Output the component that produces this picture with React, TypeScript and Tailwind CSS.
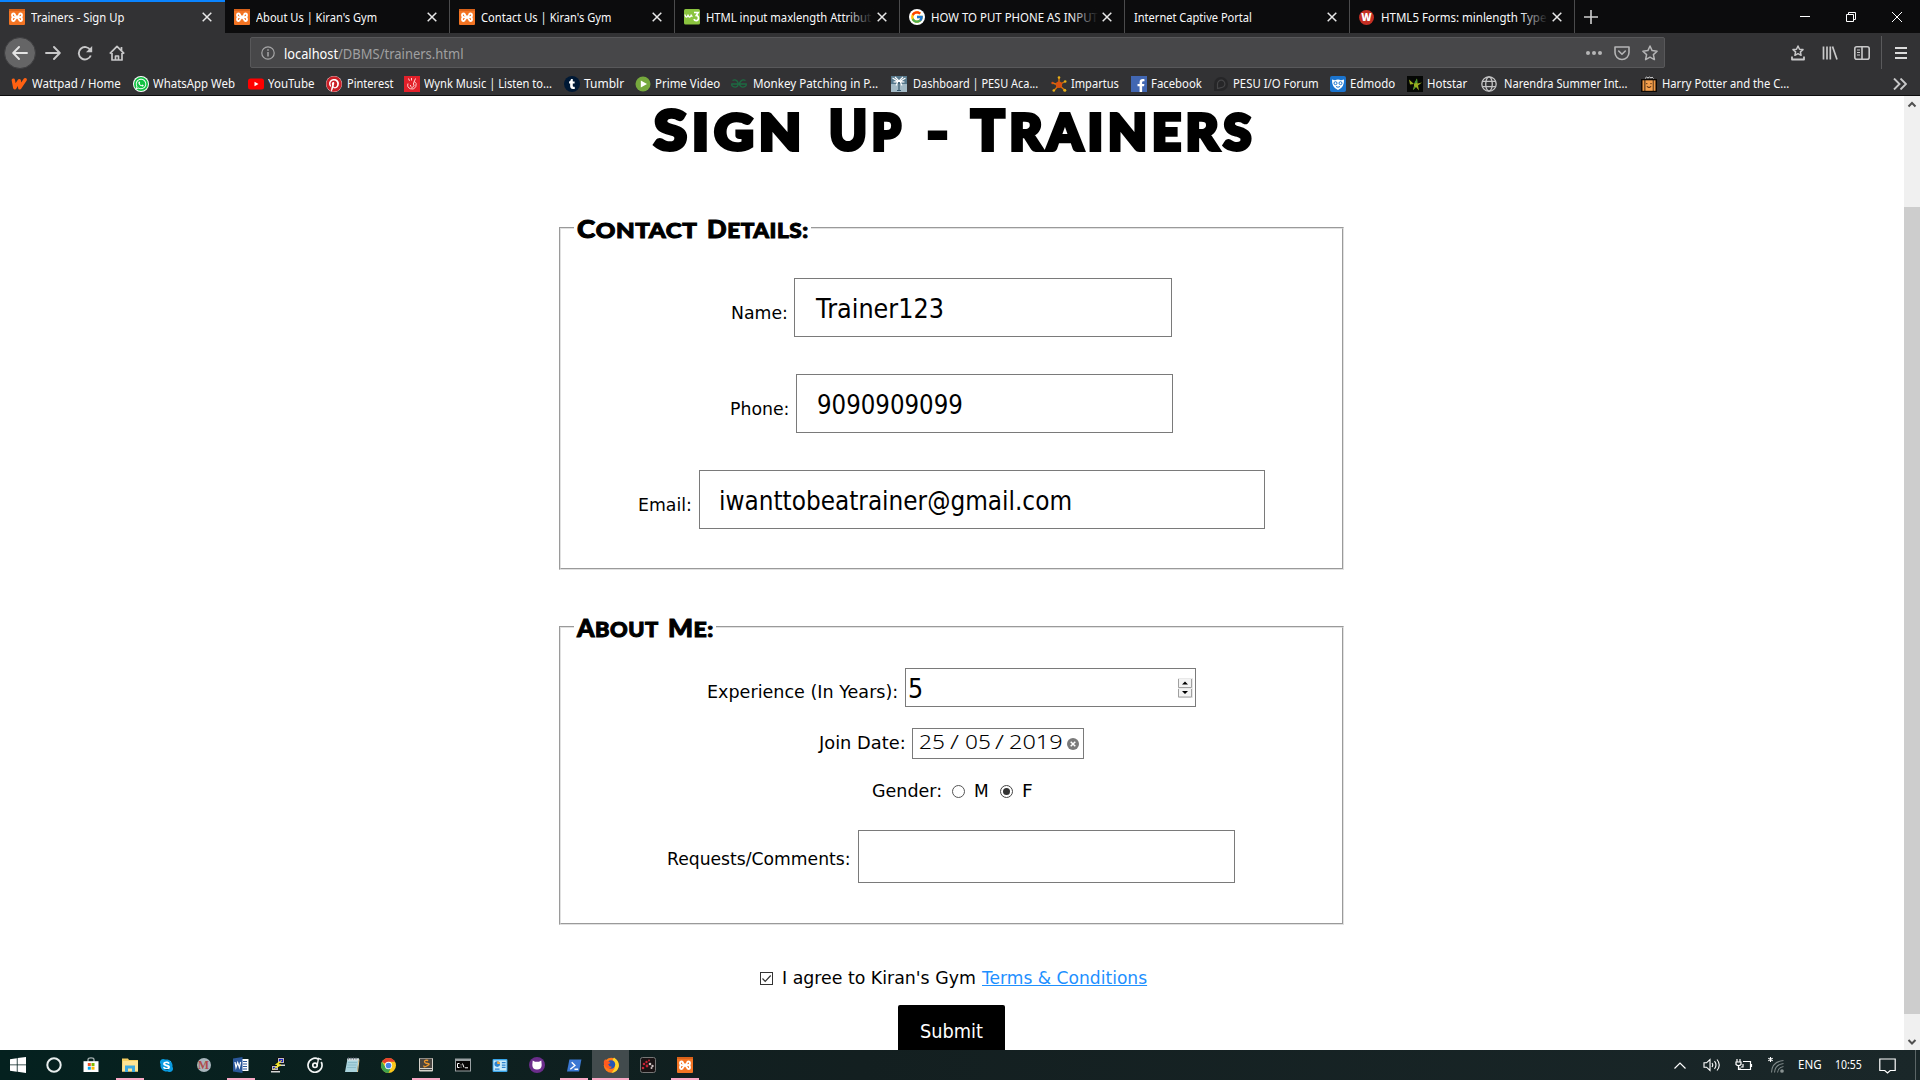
import React, { useLayoutEffect, useRef, useState } from "react";
import { FaWhatsapp, FaPinterest, FaTumblr, FaFacebookF, FaSkype } from "react-icons/fa";
import { FcGoogle } from "react-icons/fc";

/** Single line of text stretched to the width of its box. */
function Fit({ className = "", children }: { className?: string; children: React.ReactNode }) {
  const outer = useRef<HTMLSpanElement>(null);
  const inner = useRef<HTMLSpanElement>(null);
  const [scale, setScale] = useState(1);
  useLayoutEffect(() => {
    if (outer.current && inner.current) {
      setScale(outer.current.offsetWidth / inner.current.offsetWidth);
    }
  }, []);
  return (
    <span ref={outer} className={"block shrink-0 whitespace-nowrap " + className}>
      <span ref={inner} className="inline-block origin-left" style={{ transform: `scaleX(${scale})` }}>
        {children}
      </span>
    </span>
  );
}

/* ---------- site icons ---------- */

const Xampp = ({ className = "size-4" }: { className?: string }) => (
  <svg viewBox="0 0 16 16" className={className}>
    <rect width="16" height="16" rx="1" fill="#f37423" />
    <rect width="16" height="2" fill="#d9621a" />
    <g fill="none" stroke="#fff" strokeWidth="1.8" strokeLinecap="round" strokeLinejoin="round">
      <path d="M6 6.200Q5.800 4.500 4.500 4.500 3 4.500 3 6.200T5 8.200H11Q13 8 13 6.200 13 4.500 11.500 4.500 10.200 4.500 10 6L6 10.400Q5.800 12 4.500 12 3 12 3 10.200T5 8.200" />
      <path d="M6 6 10 10.400Q10.200 12 11.500 12 13 12 13 10.200T11 8.200" />
    </g>
  </svg>
);

const W3 = () => (
  <svg viewBox="0 0 16 16" className="size-4">
    <rect width="16" height="15.500" rx="1.500" fill="#8bc43f" />
    <path d="M1 5.500q.3 2.500 1.500 2.500T4 5.500q.3 2.500 1.600 2.500T7.200 5.500q.2 2 1.300 2" fill="none" stroke="#fff" strokeWidth="1.300" />
    <path d="M10 3.500h4.200l-2 3q2.300.3 2.300 2.600 0 2.600-2.300 2.600-1.700 0-2.300-1.600" fill="none" stroke="#fff" strokeWidth="1.600" />
  </svg>
);

const GoogleFav = () => (
  <span className="flex size-4 items-center justify-center rounded-full bg-white">
    <FcGoogle className="size-[14px]" />
  </span>
);

const WBall = () => (
  <span className="flex size-[15px] items-center justify-center rounded-full bg-[#c52f24] font-['Open_Sans',sans-serif] text-[10px] leading-none font-extrabold text-white">
    W
  </span>
);

const Wattpad = () => (
  <svg viewBox="0 0 17 16" className="h-4 w-[17px]">
    <path d="M2.500 4 4 12l4.800-7.500.5 7.500L15 3.500" fill="none" stroke="#ff6112" strokeWidth="3.600" strokeLinecap="round" strokeLinejoin="round" />
  </svg>
);
const WhatsApp = () => (
  <span className="flex size-4 items-center justify-center rounded-full bg-white">
    <span className="flex size-[14px] items-center justify-center rounded-full bg-[#12c143]">
      <FaWhatsapp className="size-3 text-white" />
    </span>
  </span>
);
const YouTube = () => (
  <svg viewBox="0 0 16 16" className="size-4">
    <rect y="2.500" width="16" height="11" rx="2.500" fill="#f00" />
    <path d="M6.500 5.700v4.600L10.500 8z" fill="#fff" />
  </svg>
);
const Pinterest = () => (
  <span className="flex size-4 rounded-full bg-white">
    <FaPinterest className="size-4 text-[#cb1f27]" />
  </span>
);
const Wynk = () => (
  <svg viewBox="0 0 16 16" className="size-4">
    <rect width="16" height="16" fill="#e3202a" />
    <path d="M4 7.500a4.200 4.200 0 1 0 6-2.300M6.500 9a1.800 1.800 0 1 0 2.800-1L11.500 2.500M4.500 2.500l1 2.300M7.500 2v2.500" fill="none" stroke="#ffd4d4" strokeWidth="1" />
  </svg>
);
const Tumblr = () => (
  <span className="flex size-4 items-center justify-center rounded-full bg-[#001935]">
    <FaTumblr className="size-[10px] text-white" />
  </span>
);
const Prime = () => (
  <svg viewBox="0 0 16 16" className="size-4">
    <circle cx="8" cy="8" r="7.500" fill="#76a93d" />
    <path d="M5.800 4.500v7L12 8z" fill="#fff" />
  </svg>
);
const Geeks = () => (
  <svg viewBox="0 0 16 16" className="size-4">
    <path d="M1.500 4.500q2.500-1.500 4.500.5t.6 5q-2.200 2-5 .2Q.5 9.500.8 8H15.200q.3 1.500-.8 2.200-2.800 1.800-5-.2T10 5q2-2 4.500-.5" fill="none" stroke="#1d6b42" strokeWidth="1.300" />
  </svg>
);
const Pesu = () => (
  <svg viewBox="0 0 16 16" className="size-4">
    <rect width="16" height="16" fill="#56788c" />
    <rect y="8" width="16" height="8" fill="#a3bac6" />
    <path d="m1.500 2 5.500 3.500L2.500 6M14.500 2 9 5.500l4.500.5M7 5.500 5 9.500M9 5.500l2 4M4 1l4 4 4-4" fill="none" stroke="#fff" strokeWidth="1.100" />
    <path d="M8 6v8M6 14.500h4" stroke="#34566b" strokeWidth="1.200" />
  </svg>
);
const Impartus = () => (
  <svg viewBox="0 0 16 16" className="size-4">
    <path d="M8 9V1.500M8 9l6-3.500M8 9l5.500 5M8 9l-5 5.500M8 9 1.500 7" stroke="#d5740c" strokeWidth="1.400" />
    <circle cx="8" cy="8.800" r="3.200" fill="#d9510f" />
    <g fill="#e5b019">
      <circle cx="8" cy="1.500" r="1.300" />
      <circle cx="14.200" cy="5.500" r="1.300" />
      <circle cx="13.800" cy="14.300" r="1.500" />
      <circle cx="2.800" cy="14.500" r="1.300" />
      <circle cx="1.500" cy="7" r="1.200" fill="#d9510f" />
    </g>
  </svg>
);
const Facebook = () => (
  <span className="flex size-4 items-end justify-center bg-[#4267b2] pl-1">
    <FaFacebookF className="size-[13px] text-white" />
  </span>
);
const Forum = () => (
  <svg viewBox="0 0 16 16" className="size-4">
    <path d="M1 15V8a7 7 0 1 1 7 7z" fill="#262628" />
    <path d="M4.500 12.500V8A3.700 3.700 0 1 1 8 11.600z" fill="none" stroke="#454547" strokeWidth="1.200" />
  </svg>
);
const Edmodo = () => (
  <svg viewBox="0 0 16 16" className="size-4">
    <rect width="16" height="16" rx="2" fill="#1b74ce" />
    <path d="M2 3.500 5 4.200Q8 3 11 4.200L14 3.500Q14.500 11.500 8 14 1.500 11.500 2 3.500z" fill="#fff" />
    <circle cx="5.500" cy="7.200" r="1.500" fill="none" stroke="#1b74ce" />
    <circle cx="10.500" cy="7.200" r="1.500" fill="none" stroke="#1b74ce" />
    <path d="M6 10.500q2 1.500 4 0" fill="none" stroke="#1b74ce" />
  </svg>
);
const Hotstar = () => (
  <svg viewBox="0 0 16 16" className="size-4">
    <rect width="16" height="16" fill="#050705" />
    <path d="M2 3.500 7 8l-4 .500zM7 8l3-5.500 .5 5 4.500-1-4 3 1 5-3-3.500L6 14l1-4z" fill="#9aae1f" />
    <path d="m7 8 3-5.500.3 4zM7.500 10 6 14l2.500-2.500z" fill="#3f9a35" />
  </svg>
);
const Globe = () => (
  <svg viewBox="0 0 16 16" className="size-4" fill="none" stroke="#c4c4c5" strokeWidth="1.300">
    <circle cx="8" cy="8" r="7.200" />
    <ellipse cx="8" cy="8" rx="3.300" ry="7.200" />
    <path d="M1.500 5.300h13M1.500 10.700h13" />
  </svg>
);
const Harry = () => (
  <svg viewBox="0 0 16 16" className="size-4">
    <path d="M4 2.500Q5.500 0 7 2 8.500 0 10 2 11 0 12.500 2.500" fill="none" stroke="#d8d8d8" />
    <rect y="3" width="16" height="13" fill="#0d0906" />
    <rect x="1.500" y="4.300" width="2" height="10.500" fill="#f19a45" />
    <rect x="12.500" y="4.300" width="2" height="10.500" fill="#f19a45" />
    <rect x="4.300" y="4.300" width="7.500" height="10.500" fill="#f4a04d" />
    <path d="M5.800 7v1.200M10 7v1.200M5.800 10.500q2.200 2 4.400 0" fill="none" stroke="#42210a" />
  </svg>
);

/* ---------- browser chrome ---------- */

const tabs = [
  { icon: <Xampp />, label: "Trainers - Sign Up", w: "w-[93px]", active: true },
  { icon: <Xampp />, label: "About Us | Kiran's Gym", w: "w-[121px]", edge: true },
  { icon: <Xampp />, label: "Contact Us | Kiran's Gym", w: "w-[130px]", edge: true },
  { icon: <W3 />, label: "HTML input maxlength Attribut", w: "w-[165px]", edge: true, fade: true },
  { icon: <GoogleFav />, label: "HOW TO PUT PHONE AS INPUT", w: "w-[167px]", edge: true, fade: true },
  { label: "Internet Captive Portal", w: "w-[118px]", edge: true },
  { icon: <WBall />, label: "HTML5 Forms: minlength Type", w: "w-[165px]", edge: true, fade: true },
];

const CloseX = () => (
  <svg viewBox="0 0 10 10" className="size-[10px] shrink-0" stroke="#e8e8e8" strokeWidth="1.500">
    <path d="m.7.7 8.600 8.600M9.300.7.7 9.300" />
  </svg>
);

function TabStrip() {
  return (
    <div className="flex h-[33px] bg-[#0c0c0d] text-[12px] leading-4 text-[#f9f9fa]">
      {tabs.map((t) => (
        <div
          key={t.label}
          className={
            "relative flex h-[33px] w-[225px] shrink-0 items-center pl-[9px] " +
            (t.active ? "bg-[#323234] " : "") +
            (t.edge ? "shadow-[inset_-1px_0_0_#4b4b4c]" : "")
          }
        >
          {t.active && <div className="absolute inset-x-0 top-0 h-[2px] bg-[#0a84ff]" />}
          {t.icon && <div className="mr-[6px] w-4 shrink-0 pt-px">{t.icon}</div>}
          <div className="relative flex-1 pt-[2px]">
            <Fit className={t.w}>{t.label}</Fit>
            {t.fade && <div className="absolute top-0 left-[140px] h-full w-[32px] bg-linear-to-r from-transparent to-[#0c0c0d] to-85%" />}
          </div>
          <div className="relative flex w-[24px] pt-px pl-px">
            <CloseX />
          </div>
        </div>
      ))}
      <div className="flex w-[32px] items-center justify-center">
        <svg viewBox="0 0 14 14" className="size-[14px]" stroke="#d0d0d0" strokeWidth="1.600">
          <path d="M7 0v14M0 7h14" />
        </svg>
      </div>
      <div className="flex flex-1 items-center justify-end gap-[36px] pr-[18px]">
        <svg viewBox="0 0 10 10" className="size-[10px]" stroke="#fff"><path d="M0 4.500h10" /></svg>
        <svg viewBox="0 0 10 10" className="size-[10px]" fill="none" stroke="#fff"><path d="M.5 2.500h7v7h-7zM2.500 2.500v-2h7v7h-2" /></svg>
        <svg viewBox="0 0 10 10" className="size-[10px]" stroke="#fff"><path d="m0 0 10 10M10 0 0 10" /></svg>
      </div>
    </div>
  );
}

function NavBar() {
  return (
    <div className="flex h-[38px] items-center bg-[#323234] pt-px text-[#c8c8c9]">
      <div className="ml-1 flex size-8 items-center justify-center rounded-full border border-[#3e3e40] bg-[#656566]">
        <svg viewBox="0 0 16 16" className="size-4" fill="none" stroke="#e4e4e4" strokeWidth="1.900" strokeLinecap="round" strokeLinejoin="round">
          <path d="M15 8H1.500M7 2 1.200 8 7 14" />
        </svg>
      </div>
      <svg viewBox="0 0 16 16" className="ml-[9px] size-4" fill="none" stroke="currentColor" strokeWidth="1.900" strokeLinecap="round" strokeLinejoin="round">
        <path d="M1 8h13.500M9 2l5.800 6L9 14" />
      </svg>
      <svg viewBox="0 0 16 16" className="ml-4 size-4" fill="none" stroke="currentColor" strokeWidth="1.900">
        <path d="M13.400 5.200A6.200 6.200 0 1 0 13.800 10.500" />
        <path d="M15.200 1v6.200H9z" fill="currentColor" stroke="none" />
      </svg>
      <svg viewBox="0 0 16 16" className="ml-4 size-4" fill="none" stroke="currentColor" strokeWidth="1.700" strokeLinejoin="round">
        <path d="M.8 8.700 8 1.300l7.200 7.400M3 8v7h10V8M6.500 15v-4h3v4M12.500 5.500V2" />
      </svg>
      <div className="ml-[125px] flex h-[31px] w-[1415px] items-center rounded-[2px] border border-[#58585a] bg-[#474749] pl-[10px]">
        <svg viewBox="0 0 14 14" className="size-[14px]" fill="none" stroke="#a7a7a8" strokeWidth="1.200">
          <circle cx="7" cy="7" r="6.200" />
          <path d="M7 6v4.500M7 3.300v1.500" strokeWidth="1.500" />
        </svg>
        <div className="ml-[9px] flex flex-1 pt-[2px] text-[13.500px] leading-[18px]">
          <Fit className="w-[54px] text-white">localhost</Fit>
          <Fit className="w-[126px] text-[#a0a0a1]">/DBMS/trainers.html</Fit>
        </div>
        <svg viewBox="0 0 16 16" className="size-4" fill="#b5b5b6"><circle cx="2" cy="8" r="2" /><circle cx="8" cy="8" r="2" /><circle cx="14" cy="8" r="2" /></svg>
        <svg viewBox="0 0 16 16" className="ml-3 size-4" fill="none" stroke="#b5b5b6" strokeWidth="1.600" strokeLinecap="round" strokeLinejoin="round">
          <path d="M1 2h14v5.500a7 7 0 0 1-14 0zM4.700 6 8 9.200 11.300 6" />
        </svg>
        <svg viewBox="0 0 16 16" className="mr-[6px] ml-3 size-4" fill="none" stroke="#b5b5b6" strokeWidth="1.500" strokeLinejoin="round">
          <path d="m8 1 2.100 4.600 5 .6-3.700 3.400 1 5L8 12.200l-4.400 2.400 1-5L.9 6.200l5-.6z" />
        </svg>
      </div>
      <svg viewBox="0 0 16 16" className="ml-[125px] size-4" fill="none" stroke="currentColor" strokeWidth="1.500" strokeLinejoin="round">
        <path d="m8 1 1.500 3.200 3.500.4-2.600 2.300.7 3.400L8 8.700l-3.100 1.600.7-3.400L3 4.600l3.500-.4z" />
        <path d="M2 11.500v3h12v-3" strokeWidth="1.800" />
      </svg>
      <svg viewBox="0 0 16 16" className="ml-4 size-4" stroke="currentColor" strokeWidth="1.700">
        <path d="M1.500 1.500v13M5 1.500v13M8.300 1.500v13M10.500 1.500l4.500 13" />
      </svg>
      <svg viewBox="0 0 16 16" className="ml-4 size-4" fill="none" stroke="currentColor" strokeWidth="1.600">
        <rect x=".8" y="1.800" width="14.400" height="12.400" rx="2" />
        <path d="M8 2v12" />
        <path d="M3 5h3M3 7.500h3M3 10h3" strokeWidth="1.100" />
      </svg>
      <div className="ml-[11px] h-[33px] w-px bg-[#5a5a5c]" />
      <svg viewBox="0 0 12 12" className="ml-[13px] h-3 w-3" stroke="#dcdcdc" strokeWidth="1.900">
        <path d="M0 1h12M0 6h12M0 11h12" />
      </svg>
    </div>
  );
}

const bookmarks = [
  { icon: <Wattpad />, label: "Wattpad / Home", item: "w-[122px] gap-[5px]", text: "w-[89px]" },
  { icon: <WhatsApp />, label: "WhatsApp Web", item: "w-[115px] gap-1", text: "w-[82px]" },
  { icon: <YouTube />, label: "YouTube", item: "w-[78px] gap-1", text: "w-[47px]" },
  { icon: <Pinterest />, label: "Pinterest", item: "w-[78px] gap-[5px]", text: "w-[46px]" },
  { icon: <Wynk />, label: "Wynk Music | Listen to...", item: "w-[160px] gap-1", text: "w-[128px]" },
  { icon: <Tumblr />, label: "Tumblr", item: "w-[71px] gap-1", text: "w-[40px]" },
  { icon: <Prime />, label: "Prime Video", item: "w-[96px] gap-1", text: "w-[65px]" },
  { icon: <Geeks />, label: "Monkey Patching in P...", item: "w-[160px] gap-[6px]", text: "w-[125px]" },
  { icon: <Pesu />, label: "Dashboard | PESU Aca...", item: "w-[160px] gap-[6px]", text: "w-[125px]" },
  { icon: <Impartus />, label: "Impartus", item: "w-[80px] gap-1", text: "w-[48px]" },
  { icon: <Facebook />, label: "Facebook", item: "w-[82px] gap-1", text: "w-[51px]" },
  { icon: <Forum />, label: "PESU I/O Forum", item: "w-[117px] gap-1", text: "w-[86px]" },
  { icon: <Edmodo />, label: "Edmodo", item: "w-[77px] gap-1", text: "w-[45px]" },
  { icon: <Hotstar />, label: "Hotstar", item: "w-[74px] gap-1", text: "w-[40px]" },
  { icon: <Globe />, label: "Narendra Summer Int...", item: "w-[160px] gap-[7px]", text: "w-[123px]" },
  { icon: <Harry />, label: "Harry Potter and the C...", item: "w-[160px] gap-[5px]", text: "w-[127px]" },
];

function Bookmarks() {
  return (
    <div className="flex h-[25px] items-center border-b border-[#0c0c0d] bg-[#323234] pt-px pl-[11px] text-[12px] leading-4 text-[#f9f9fa]">
      {bookmarks.map((b) => (
        <div key={b.label} className={"flex shrink-0 items-center " + b.item}>
          <div className="flex w-4 shrink-0 items-center">{b.icon}</div>
          <Fit className={b.text}>{b.label}</Fit>
        </div>
      ))}
      <svg viewBox="0 0 14 12" className="mr-[13px] ml-auto h-3 w-[14px]" fill="none" stroke="#c8c8c9" strokeWidth="1.900">
        <path d="m1 .5 5.500 5.500L1 11.500M7.500.5 13 6l-5.500 5.500" />
      </svg>
    </div>
  );
}

/* ---------- page ---------- */

function Panel({ className, gap, title, children }: { className: string; gap: string; title: React.ReactNode; children: React.ReactNode }) {
  return (
    <section className={"relative ml-[559px] w-[785px] border border-t-[#9a9a9a] border-r-[#e1e1e1] border-b-[#e1e1e1] border-l-[#9a9a9a] " + className}>
      <div className="h-full border border-t-[#e1e1e1] border-r-[#9a9a9a] border-b-[#9a9a9a] border-l-[#e1e1e1]">{children}</div>
      <div className={"absolute -top-[12px] left-[14px] flex h-[26px] items-baseline gap-[9px] bg-white pl-[3px] font-['Lato',sans-serif] text-[21px] leading-[25px] font-black tracking-[0.5px] uppercase [-webkit-text-stroke:1px_#000] " + gap}>
        {title}
      </div>
    </section>
  );
}

const Big = ({ children }: { children: string }) => <span className="text-[24px]">{children}</span>;
const Huge = ({ children }: { children: string }) => <span className="text-[55px]">{children}</span>;

const Spinner = () => (
  <svg viewBox="0 0 15 20" className="h-5 w-[15px]">
    <rect width="15" height="20" fill="#e9e9e9" />
    <path d="M.5 1v8.500h13V1M.5 11v8h13v-8" fill="#f3f3f3" stroke="#a0a0a0" />
    <path d="M4 6.500h6L7 3.500zM4 13h6L7 16z" fill="#000" />
  </svg>
);

function Page() {
  return (
    <main className="h-[954px] w-[1904px] overflow-hidden bg-white font-['DejaVu_Sans',sans-serif] text-[17px] leading-5 text-black">
      <h1 className="flex h-[130px] items-baseline pl-[654px] font-['Lato',sans-serif] text-[50px] leading-[66px] font-black tracking-[5px] uppercase [-webkit-text-stroke:4px_#000] [stroke-linejoin:round]">
        <Fit className="mr-[23px] w-[152px]"><Huge>S</Huge>ign</Fit>
        <Fit className="mr-[22px] w-[76px]"><Huge>U</Huge>p</Fit>
        <Fit className="mr-[17px] w-[27px]">-</Fit>
        <Fit className="w-[285px]"><Huge>T</Huge>rainers</Fit>
      </h1>

      <Panel
        className="mt-px h-[343px]"
        gap="w-[237px]"
        title={<><Fit className="w-[121px]"><Big>C</Big>ontact</Fit><Fit className="w-[102px]"><Big>D</Big>etails:</Fit></>}
      >
        <div className="mt-[49px] ml-[170px] flex h-[60px] items-start">
          <Fit className="mt-[25px] w-[57px]">Name:</Fit>
          <div className="ml-[6px] h-[59px] w-[378px] border border-[#7a7a7a] pt-[14px] pl-[21px]">
            <Fit className="w-[128px] text-[27px] leading-[32px]">Trainer123</Fit>
          </div>
        </div>
        <div className="mt-[36px] ml-[169px] flex h-[60px] items-start">
          <Fit className="mt-[25px] w-[59px]">Phone:</Fit>
          <div className="ml-[7px] h-[59px] w-[377px] border border-[#7a7a7a] pt-[14px] pl-[20px]">
            <Fit className="w-[146px] text-[27px] leading-[32px]">9090909099</Fit>
          </div>
        </div>
        <div className="mt-[36px] ml-[77px] flex h-[60px] items-start">
          <Fit className="mt-[25px] w-[54px]">Email:</Fit>
          <div className="ml-[7px] h-[59px] w-[566px] border border-[#7a7a7a] pt-[14px] pl-[19px]">
            <Fit className="w-[353px] text-[27px] leading-[32px]">iwanttobeatrainer@gmail.com</Fit>
          </div>
        </div>
      </Panel>

      <Panel
        className="mt-[56px] h-[299px]"
        gap="w-[142px]"
        title={<><Fit className="w-[82px]"><Big>A</Big>bout</Fit><Fit className="w-[46px]"><Big>M</Big>e:</Fit></>}
      >
        <div className="mt-[40px] ml-[146px] flex h-[39px] items-start">
          <Fit className="mt-[14px] w-[191px]">Experience (In Years):</Fit>
          <div className="ml-[7px] flex h-[39px] w-[291px] justify-between border border-[#7a7a7a] pt-[4px] pr-[2px] pl-[2px]">
            <Fit className="w-[15px] text-[27px] leading-[32px]">5</Fit>
            <div className="pt-[5px]"><Spinner /></div>
          </div>
        </div>
        <div className="mt-[21px] ml-[258px] flex h-[31px] items-start">
          <Fit className="mt-[5px] w-[87px]">Join Date:</Fit>
          <div className="ml-[6px] flex h-[31px] w-[172px] items-start border border-[#7a7a7a] pt-px pl-[6px] font-['Noto_Sans',sans-serif] text-[20px] leading-[24px] font-light">
            <Fit className="w-[26px]">25</Fit>
            <Fit className="ml-[5px] w-[9px]">/</Fit>
            <Fit className="ml-[6px] w-[26px]">05</Fit>
            <Fit className="ml-[4px] w-[9px]">/</Fit>
            <Fit className="ml-[5px] w-[54px]">2019</Fit>
            <svg viewBox="0 0 12 12" className="mt-[8px] ml-[4px] size-3">
              <circle cx="6" cy="6" r="6" fill="#7a7a7a" />
              <path d="m3.700 3.700 4.600 4.600M8.300 3.700 3.700 8.300" stroke="#fff" strokeWidth="1.500" />
            </svg>
          </div>
        </div>
        <div className="mt-[22px] ml-[311px] flex h-5 items-center">
          <Fit className="w-[70px]">Gender:</Fit>
          <div className="ml-[10px] size-[13px] rounded-full border border-[#555]" />
          <Fit className="ml-[9px] w-[15px]">M</Fit>
          <div className="ml-[11px] flex size-[13px] items-center justify-center rounded-full border border-[#444]">
            <div className="size-[7px] rounded-full bg-[#333]" />
          </div>
          <Fit className="ml-[9px] w-[11px]">F</Fit>
        </div>
        <div className="mt-[29px] ml-[106px] flex h-[53px] items-start">
          <Fit className="mt-[19px] w-[184px]">Requests/Comments:</Fit>
          <div className="ml-[7px] h-[53px] w-[377px] border border-[#7a7a7a]" />
        </div>
      </Panel>

      <div className="mt-[43px] ml-[760px] flex h-5 items-center">
        <div className="flex size-[13px] items-center justify-center border border-[#333]">
          <svg viewBox="0 0 11 11" className="size-[11px]" fill="none" stroke="#333" strokeWidth="1.200"><path d="m1.500 5.500 2.700 2.800L9.700 2.500" /></svg>
        </div>
        <Fit className="ml-[9px] w-[194px]">I agree to Kiran's Gym</Fit>
        <Fit className="ml-[6px] w-[165px] text-[#1e90ff]"><a className="underline">Terms &amp; Conditions</a></Fit>
      </div>
      <div className="mt-[17px] ml-[898px] h-[60px] w-[107px] rounded-[2px] bg-black pt-[14px] pl-[22px] text-white">
        <Fit className="w-[63px] text-[20px] leading-6">Submit</Fit>
      </div>
    </main>
  );
}

function Scrollbar() {
  return (
    <div className="flex h-[954px] w-4 flex-col items-center bg-[#f0f0f0]">
      <svg viewBox="0 0 16 17" className="h-[17px] w-4" fill="none" stroke="#505050" strokeWidth="2"><path d="m4.500 10.500 3.500-3.500 3.500 3.500" /></svg>
      <div className="mt-[94px] h-[807px] w-4 bg-[#cdcdcd]" />
      <svg viewBox="0 0 16 17" className="mt-auto h-[17px] w-4" fill="none" stroke="#505050" strokeWidth="2"><path d="m4.500 7 3.500 3.500L11.500 7" /></svg>
    </div>
  );
}

/* ---------- taskbar ---------- */

const apps: { name: string; open?: boolean; focus?: boolean; cell?: string; icon: React.ReactNode }[] = [
  { name: "start", cell: "w-[36px]", icon: <svg viewBox="0 0 16 16" className="size-4" fill="#fff"><path d="M0 2.200 6.800 1.200v6.300H0zM7.600 1.100 16 0v7.500H7.600zM0 8.300h6.800v6.400L0 13.800zM7.600 8.300H16V16l-8.400-1.200z" /></svg> },
  { name: "cortana", cell: "w-[36px]", icon: <svg viewBox="0 0 16 16" className="size-4" fill="none" stroke="#e8eeee" strokeWidth="2"><circle cx="8" cy="8" r="6.700" /></svg> },
  { name: "store", cell: "w-[39px] pr-px", icon: <svg viewBox="0 0 16 16" className="size-4"><path d="M5 5V2.500Q5 .8 8 .8t3 1.700V5" fill="none" stroke="#aab4b4" strokeWidth="1.200" /><path d="M.5 4.200h15V15H.5z" fill="#fff" /><path d="M4.800 6h3v3h-3z" fill="#f25022" /><path d="M8.500 6h3v3h-3z" fill="#7fba00" /><path d="M4.800 9.700h3v3h-3z" fill="#00a4ef" /><path d="M8.500 9.700h3v3h-3z" fill="#ffb900" /></svg> },
  { name: "files", open: true, icon: <svg viewBox="0 0 16 16" className="size-4"><path d="M0 1.500h6l1 1.500h9v11.500H0z" fill="#f7cf62" /><path d="M1 4h15v10.500H0z" fill="#ffe394" /><path d="M3 8.500h10V15h-3v-3.500H6V15H3z" fill="#3fa9e0" /></svg> },
  {
    name: "skype",
    icon: (
      <span className="relative flex size-4 items-center justify-center">
        <span className="absolute size-2 bg-white" />
        <FaSkype className="relative size-[15px] text-[#0a9be0]" />
      </span>
    ),
  },
  { name: "mathtype", icon: <span className="flex size-[14px] items-center justify-center rounded-full bg-[#a9b6bd] font-['Liberation_Serif',serif] text-[12px] leading-none font-bold text-[#b04c4c]">M</span> },
  { name: "word", open: true, icon: <svg viewBox="0 0 16 16" className="size-4"><path d="M8 2h7.500v12H8z" fill="#fff" /><path d="M10 4.500h4M10 7h4M10 9.500h4M10 12h4" stroke="#2b579a" /><path d="M0 1.500 9.500 0v16L0 14.500z" fill="#2b579a" /><path d="m2 5 1 5.500L4.700 5.500l1.700 5L7.600 5" fill="none" stroke="#fff" strokeWidth="1.200" /></svg> },
  { name: "putty", icon: <svg viewBox="0 0 16 16" className="size-4"><path d="M7.500.5h7v6h-7zM1.500 8.500h7v5h-7z" fill="#bdbdbd" stroke="#111" /><path d="M9 2h4v3H9zM3 10h3.500v2H3z" fill="#1a1ad0" /><path d="M7 7.500h8V9H7zM1 14h9v1.500H1z" fill="#d6d6d6" /><path d="M12 3 5.500 7.500l3 .5L3 12.500l8-4.500-3-.5z" fill="#ffef1f" stroke="#ffef1f" strokeWidth=".6" /></svg> },
  { name: "groove", icon: <svg viewBox="0 0 16 16" className="size-4" fill="none" stroke="#f2f5f5" strokeWidth="1.700"><path d="M11.500 2.200A7 7 0 1 0 14.200 5" /><circle cx="8" cy="8.300" r="2.200" /><path d="M10.200 8.300 11.500 1.500l3 1.200" strokeWidth="1.300" /></svg> },
  { name: "notepad", icon: <svg viewBox="0 0 16 16" className="size-4"><path d="M3.500 1.500H15L13 15H1z" fill="#a9d3dc" /><path d="M3.500 1.500H15l-.3 2H3.200z" fill="#d9e4e4" /><path d="M4 5.500h9M3.500 8h9M3 10.500h9" stroke="#8bbcc8" /><path d="M4.500.5v2M7 .5v2M9.500.5v2M12 .5v2" stroke="#667" /><path d="M15 2.500 13.500 15" stroke="#e5cf9a" /></svg> },
  { name: "chrome", icon: <svg viewBox="0 0 16 16" className="size-[15px]"><circle cx="8" cy="8" r="8" fill="#fbc71b" /><path d="M8 8 1.070 4A8 8 0 0 1 14.930 4H8z" fill="#e5402f" /><path d="M1.070 4A8 8 0 0 0 8 16l3-6.300L8 8 4.600 9.500z" fill="#3fa24c" /><circle cx="8" cy="8" r="3.900" fill="#fff" /><circle cx="8" cy="8" r="3" fill="#4683e8" /></svg> },
  { name: "sublime", open: true, icon: <svg viewBox="0 0 16 16" className="size-4"><rect x="1" y="1" width="14" height="13.500" rx="1" fill="#d6d2cb" /><rect x="2" y="1.500" width="12" height="9.500" fill="#494540" /><path d="M10.200 3.500Q6.500 2.700 6.500 4.500T9.700 6.500 9.200 8.800 6 8.500" fill="none" stroke="#f29a2c" strokeWidth="1.300" /><path d="M2 12.500h12" stroke="#4a4a4a" /></svg> },
  { name: "cmd", icon: <svg viewBox="0 0 16 14" className="h-[14px] w-4"><path d="M0 .5h16v13H0z" fill="#9aa1a3" /><path d="M1 3h14v9.500H1z" fill="#050505" /><path d="M4.500 5.500h-2v4h2M6 6.500v.8M6 8.700v.8M7.500 5.500l1.500 4M10 9.800h3" fill="none" stroke="#fff" /></svg> },
  { name: "control", icon: <svg viewBox="0 0 16 14" className="h-[13px] w-4"><rect width="16" height="14" rx="1" fill="#38a5ea" /><path d="M1 1.500h14v11H1z" fill="#c9ebfb" /><circle cx="5" cy="5.500" r="3" fill="#2b82cf" /><path d="M5 5.500V2.500a3 3 0 0 1 3 3z" fill="#f6a83c" /><path d="M10 4h4M10 6.500h4M10 9h4M2.500 11h5" stroke="#2b82cf" strokeWidth="1.300" /></svg> },
  { name: "github", icon: <svg viewBox="0 0 16 16" className="size-4"><circle cx="8" cy="8" r="8" fill="#6b2d8b" /><path d="M3.700 3.500 6 4.700h4l2.300-1.200.4 4.500Q12.500 12.500 8 12.500T3.300 8z" fill="#fff" /></svg> },
  { name: "powershell", open: true, icon: <svg viewBox="0 0 16 14" className="h-[13px] w-4"><path d="M3 .5h13L13.500 13.500H.5z" fill="#3b78d3" /><path d="M5.500 3.500 9 7l-5 4M8.500 11h4" fill="none" stroke="#fff" strokeWidth="1.500" /></svg> },
  { name: "firefox", open: true, focus: true, icon: <svg viewBox="0 0 16 16" className="size-4"><circle cx="8.300" cy="8.300" r="7.500" fill="#ff7a18" /><path d="M11 .5Q16.500 4 15.800 9.500 14.500 15.500 8.500 15.900 12.500 12 12 8.500 12 4.500 9.500 3z" fill="#ffd42a" /><circle cx="8" cy="7.500" r="4.200" fill="#2455b5" /><path d="M.8 4.500Q2 2 2.500 2.200L3.500 4q2.500-.5 4 2l-2.300 1.300Q6 10 9 9.800 7 12.500 4 11 .5 9 .8 4.500z" fill="#ff5a1f" /></svg> },
  { name: "game", icon: <svg viewBox="0 0 16 16" className="size-4"><rect x=".5" y=".5" width="15" height="15" rx="2" fill="#191314" stroke="#777" /><g fill="#c72334"><circle cx="4" cy="7" r="1.300" /><circle cx="3" cy="11" r="1.300" /><circle cx="6.500" cy="5" r="1.200" /><circle cx="7" cy="9" r="1.400" /><circle cx="9" cy="3.500" r="1" /></g><g fill="#cfc4c4"><circle cx="10" cy="7" r="1.300" /><circle cx="12.500" cy="9" r="1.200" /><circle cx="11.500" cy="11" r="1" /></g></svg> },
  { name: "xampp", open: true, icon: <Xampp /> },
];

function Taskbar() {
  return (
    <div className="flex h-[30px] bg-linear-to-r from-[#04211f] via-[#131f20] via-45% to-[#1a2729] font-['Noto_Sans',sans-serif] text-white">
      {apps.map((a) => (
        <div key={a.name} className={"flex h-[30px] shrink-0 flex-col items-center " + (a.cell ?? "w-[37px]") + (a.focus ? " bg-[#424b4d]" : "")}>
          <div className="flex h-7 items-center justify-center pt-[2px]">{a.icon}</div>
          {a.open && <div className={"h-[2px] bg-[#f9a9c6] " + (a.focus ? "w-[37px]" : "w-[28px]")} />}
        </div>
      ))}
      <div className="ml-auto flex h-[30px] items-center text-[12px]">
        <svg viewBox="0 0 12 7" className="mr-[17px] h-[7px] w-3" fill="none" stroke="#fff" strokeWidth="1.200"><path d="m.5 6.500 5.500-5.500 5.500 5.500" /></svg>
        <svg viewBox="0 0 18 14" className="mr-[14px] h-[14px] w-[18px]" fill="none" stroke="#fff" strokeWidth="1.100">
          <path d="M1 4.800h2.500L7 1.500v11L3.500 9.200H1zM9 5q1.500 2 0 4M11.500 3.200q3 3.800 0 7.600M14 1.500q4.500 5.500 0 11" />
        </svg>
        <svg viewBox="0 0 18 14" className="mr-[15px] h-[14px] w-[18px]" fill="none" stroke="#fff" strokeWidth="1.200">
          <path d="M8 3.500h7.500v8H5V9.500M16.500 6v3M2 1v2.500M5 1v2.500M1 4h5v2.500q-2.500 2.200-5 0zM3.500 8v3.500H5M8 6v3H6" />
        </svg>
        <svg viewBox="0 0 16 16" className="mr-[14px] size-4" fill="none" stroke="#7e8888" strokeWidth="1.100">
          <path d="M3.500 15.500Q4 4.500 15.500 3.500M6.500 15.500Q7 7.500 15.500 6.500M9.500 15.500Q10 10.500 15.500 9.500" />
          <circle cx="14" cy="14" r="1.300" fill="#9aa3a3" />
          <path d="M2.500 0v5M.3 1.200l4.400 2.600M4.700 1.200.3 3.800" stroke="#fff" />
        </svg>
        <Fit className="mr-[13px] w-[24px]">ENG</Fit>
        <Fit className="mr-[17px] w-[27px]">10:55</Fit>
        <svg viewBox="0 0 17 16" className="mt-px mr-[19px] h-4 w-[17px]" fill="none" stroke="#fff" strokeWidth="1.200"><path d="M.8 1h15.400v11.500h-5L8.500 15l-2.700-2.500h-5z" /></svg>
        <div className="mr-1 h-[30px] w-px bg-[#5b6566]" />
      </div>
    </div>
  );
}

export default function App() {
  return (
    <div className="flex h-[1080px] w-[1920px] flex-col overflow-hidden bg-white font-['Noto_Sans',sans-serif]">
      <TabStrip />
      <NavBar />
      <Bookmarks />
      <div className="flex h-[954px]">
        <Page />
        <Scrollbar />
      </div>
      <Taskbar />
    </div>
  );
}
